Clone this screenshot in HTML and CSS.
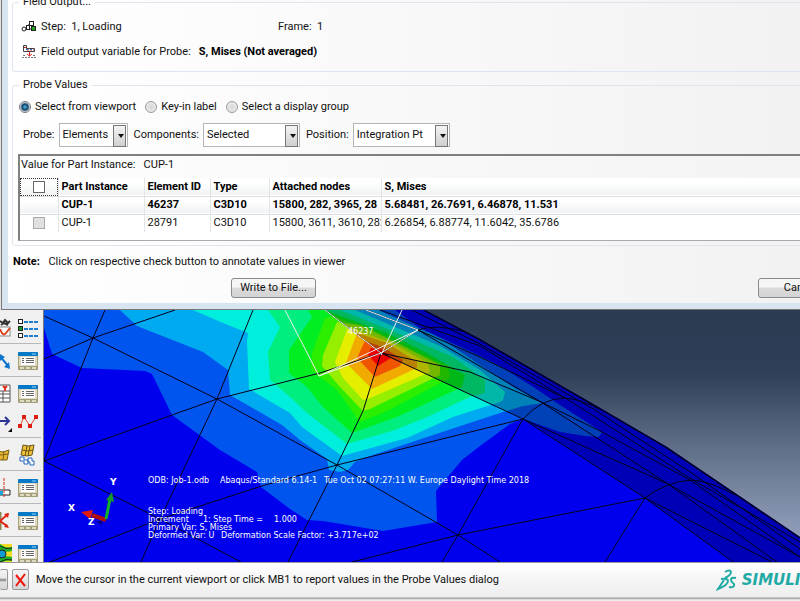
FILE: index.html
```html
<!DOCTYPE html>
<html lang="en">
<head>
  <meta charset="UTF-8">
  <meta name="viewport" content="width=device-width, initial-scale=1.0">
  <title>Probe Values</title>
  <link rel="stylesheet" href="styles.css">
</head>
<body>
  <!-- shared icons -->
  <svg class="sprite" aria-hidden="true">
    <symbol id="manager" viewBox="0 0 20 20">
      <rect x="0" y="1" width="20" height="18" rx="1" fill="#a39f7c"/>
      <rect x="0" y="1" width="20" height="4" rx="1" fill="#0878c8"/>
      <rect x="14" y="2" width="4" height="2" fill="#4aa5e4"/>
      <rect x="1" y="5" width="18" height="10" fill="#dedbc0"/>
      <rect x="3" y="6" width="14" height="8" fill="#fff"/>
      <path d="M4 7.500h2M8 7.500h8M4 9.500h2M8 9.500h8M4 11.500h2M8 11.500h8" stroke="#666" stroke-width="1"/>
      <path d="M2 17h4M8 17h4M14 17h4" stroke="#dedbc0" stroke-width="2"/>
    </symbol>
  </svg>

  <form class="dialog" onsubmit="return false">
    <fieldset class="group">
      <legend>Field Output...</legend>
      <div class="info step">
        <svg width="16" height="12" viewBox="0 0 16 12">
          <path d="M4 8h4V3h3M8 8h3" fill="none" stroke="#222"/>
          <circle cx="3" cy="8" r="2" fill="#fff" stroke="#222"/>
          <rect x="5.500" y="4.500" width="3" height="4" fill="#fff" stroke="#222"/>
          <rect x="8.500" y=".5" width="4" height="4" fill="#fff" stroke="#222"/>
          <rect x="10.500" y="5.500" width="4" height="4" fill="#1fa51f" stroke="#222"/>
        </svg>
        <span class="step-name">Step:&nbsp; 1, Loading</span>
        <span>Frame:&nbsp; 1</span>
      </div>
      <div class="info">
        <svg width="16" height="16" viewBox="0 0 16 16">
          <path d="M2.500 1.500h3v3h8v3h-11z" fill="#fff" stroke="#444"/>
          <path d="M3 3.500h2M6 6h7" stroke="#d22" stroke-dasharray="2 1"/>
          <path d="M5 5.500h8" stroke="#2a6fc0" stroke-dasharray="2 2"/>
          <path d="M8.500 8v4M6 10l2.500 2 2.500-2" fill="none" stroke="#d22"/>
          <path d="M1 13.500h14M2 11.500h3M12 11.500h2" stroke="#777" stroke-dasharray="2 1"/>
        </svg>
        <span>Field output variable for Probe:</span>
        <b>S, Mises (Not averaged)</b>
      </div>
    </fieldset>

    <fieldset class="group probe">
      <legend>Probe Values</legend>
      <div class="radios">
        <label><input type="radio" name="src" checked>Select from viewport</label>
        <label><input type="radio" name="src">Key-in label</label>
        <label><input type="radio" name="src">Select a display group</label>
      </div>
      <div class="combos">
        <label for="probe">Probe:</label>
        <span class="combo"><select id="probe" class="short"><option>Elements</option><option>Nodes</option></select></span>
        <label for="comp">Components:</label>
        <span class="combo"><select id="comp"><option>Selected</option><option>All</option></select></span>
        <label for="pos">Position:</label>
        <span class="combo"><select id="pos"><option>Integration Pt</option><option>Centroid</option></select></span>
      </div>
      <div class="values">
        <p>Value for Part Instance:&nbsp;&nbsp; CUP-1</p>
        <table>
          <colgroup>
            <col class="c-check"><col class="c-part"><col class="c-id"><col class="c-type"><col class="c-nodes"><col>
          </colgroup>
          <tr class="head">
            <th class="focus"><input type="checkbox" aria-label="Check all"></th>
            <th>Part Instance</th><th>Element ID</th><th>Type</th><th>Attached nodes</th><th>S, Mises</th>
          </tr>
          <tr class="current">
            <td></td><td>CUP-1</td><td>46237</td><td>C3D10</td><td>15800, 282, 3965, 28</td><td>5.68481, 26.7691, 6.46878, 11.531</td>
          </tr>
          <tr>
            <td><input type="checkbox" class="grey" aria-label="Annotate 28791"></td><td>CUP-1</td><td>28791</td><td>C3D10</td><td>15800, 3611, 3610, 282</td><td>6.26854, 6.88774, 11.6042, 35.6786</td>
          </tr>
        </table>
      </div>
    </fieldset>

    <p class="note"><b>Note:</b> Click on respective check button to annotate values in viewer</p>
    <div class="actions">
      <button type="button">Write to File...</button>
      <button type="button">Cancel</button>
    </div>
  </form>

  <main class="workspace">
    <div class="toolbox">
      <div class="tools">
        <button aria-label="Plot options"><svg width="12" height="20" viewBox="0 0 12 20"><path d="M0 3l3 2 2-3 3 3 2-2M1 7l3-2 4 2" fill="none" stroke="#333" stroke-width="2"/><rect x="-4" y="9" width="14" height="9" fill="#fff" stroke="#888"/><path d="M0 11q3 8 6 4l4-5" fill="none" stroke="#e0421c" stroke-width="2"/></svg></button>
        <button aria-label="Result options"><svg width="20" height="20" viewBox="0 0 20 20"><g fill="#fff" stroke="#222"><rect x=".5" y="1.500" width="4" height="4"/><rect x=".5" y="8.500" width="4" height="4" fill="#12a022"/><rect x=".5" y="15.500" width="4" height="4"/></g><path d="M6 4h14M6 11h14M6 18h14" stroke="#1c7ed0" stroke-width="2" stroke-dasharray="4 1"/></svg></button>
      </div>
      <div class="tools">
        <button aria-label="Symbols"><svg width="12" height="20" viewBox="0 0 12 20"><path d="M-2 3l11 13" stroke="#0d75cc" stroke-width="2"/><path d="M10 18l-6-2 5-5zM0 3l5 3-5 4z" fill="#0d75cc"/></svg></button>
        <button aria-label="Symbol manager"><svg width="20" height="20"><use href="#manager"/></svg></button>
      </div>
      <div class="tools">
        <button aria-label="XY data"><svg width="12" height="20" viewBox="0 0 12 20"><path d="M-3 1h13v17H-3zM-3 7h13M-3 10h13M-3 14h13M3 7v11" fill="#fff" stroke="#555"/><path d="M3 2l2 2 2-2M5 4v3" fill="none" stroke="#e0321c" stroke-width="2"/></svg></button>
        <button aria-label="XY data manager"><svg width="20" height="20"><use href="#manager"/></svg></button>
        <button aria-label="Path"><svg width="12" height="20" viewBox="0 0 12 20"><path d="M0 9h9M5 5l4 4-4 4" fill="none" stroke="#2c3598" stroke-width="2"/><path d="M12 16v4H8z"/></svg></button>
        <button aria-label="XY plot"><svg width="20" height="20" viewBox="0 0 20 20"><path d="M2 14L6 5l6 9 6-9" fill="none" stroke="#e8442a" stroke-width="1"/><g fill="#dd1f12"><rect x="0" y="12" width="4" height="4"/><rect x="4" y="3" width="4" height="4"/><rect x="10" y="12" width="4" height="4"/><rect x="16" y="3" width="4" height="4"/></g></svg></button>
      </div>
      <div class="tools">
        <button aria-label="Superimpose"><svg width="12" height="20" viewBox="0 0 12 20"><path d="M-3 6l6 1 6-2-2 10-6 0-4-1z" fill="#e8b630" stroke="#766015"/><path d="M0 10l8-1M4 6l-1 9" stroke="#766015"/></svg></button>
        <button aria-label="Mesh options"><svg width="20" height="22" viewBox="0 0 20 22"><path d="M5 1q5 2 11 0l-2 10q-5 2-11 0z" fill="#f1c13c" stroke="#655413"/><path d="M4 6q6 2 11 0M9 2L7 12M12 2l-2 10" fill="none" stroke="#655413"/><path d="M2 13h4v3h4v4H6v-3H2zM10 14h4v3h2v4h-4v-3h-2z" fill="#fff" stroke="#2762ba"/></svg></button>
      </div>
      <div class="tools">
        <button aria-label="View cut"><svg width="12" height="20" viewBox="0 0 12 20"><path d="M-2 12h12v5H-2z" fill="#fff" stroke="#222"/><path d="M0 13h3v4H0z" fill="#16a5dd"/><path d="M4 0v20" stroke="#e02818" stroke-dasharray="3 1"/></svg></button>
        <button aria-label="View cut manager"><svg width="20" height="20"><use href="#manager"/></svg></button>
      </div>
      <div class="tools">
        <button aria-label="Free body"><svg width="12" height="20" viewBox="0 0 12 20"><path d="M0 1v18" stroke="#8d8554" stroke-width="3"/><path d="M0 10l8-7M0 10l7 5" stroke="#df2414" stroke-width="2"/><path d="M9 2L4 3l4 4zM9 17l-5-1 3-3z" fill="#df2414"/></svg></button>
        <button aria-label="Free body manager"><svg width="20" height="20"><use href="#manager"/></svg></button>
      </div>
      <div class="tools">
        <button aria-label="Contours"><svg width="12" height="20" viewBox="0 0 12 20"><rect width="12" height="20" fill="#f3dc26"/><path d="M0 0q6 5 12 3v4Q6 9 0 6zM0 20q6-5 12-3v-4Q6 11 0 14z" fill="#1cb32b"/><circle cx="2" cy="10" r="4" fill="#129ad3" stroke="#222"/><path d="M0 2q6 4 12 2M0 18q6-4 12-2" fill="none" stroke="#222"/></svg></button>
        <button aria-label="Contour manager"><svg width="20" height="20"><use href="#manager"/></svg></button>
      </div>
    </div>

    <svg class="viewport" viewBox="44 310 756 252" preserveAspectRatio="xMinYMin slice">
      <defs>
        <linearGradient id="sky" x1="0" y1="0" x2="0" y2="1">
          <stop offset="0" stop-color="#2b3b52"/>
          <stop offset=".25" stop-color="#2f3f57"/>
          <stop offset=".5" stop-color="#596880"/>
          <stop offset=".85" stop-color="#8b98b4"/>
          <stop offset="1" stop-color="#98a5c2"/>
        </linearGradient>
        <clipPath id="part"><path d="M44 310H425L480 339L595 405L667 447L735 493L800 537V562H44z"/></clipPath>
      </defs>
      <rect x="44" y="310" width="756" height="252" fill="url(#sky)"/>
      <g clip-path="url(#part)">
        <rect x="44" y="310" width="756" height="252" fill="#0000ee"/>
        <!-- contour bands, low to high stress -->
        <path fill="#0055ee" d="M44 310V328L52 354L82 368L145 371L152 374L172 415L220 450L257 472L261 487L290 509L307 520L323 521L383 531L437 522L436 491L462 460L480 446L510 424L523 419L560 432L585 436L599 437L602 432L560 405L535 388L500 366L480 356L420 328L395 310z"/>
        <path fill="#00aaf0" d="M120 310L137 326L203 352L228 370L230 395L282 425L300 440L327 459L329 470L340 472L348 470L355 462L367 457L433 435L500 413L523 406L542 403L513 387L480 365L440 338L378 310z"/>
        <path fill="#00eedc" d="M193 310L223 323L248 333L247 342L249 389L290 413L302 427L342 456L407 438L453 417L500 402L503 400L505 392L480 370L440 346L355 310z"/>
        <path fill="#00ee80" d="M268 310L280 327L268 352L270 380L290 397L307 413L347 444L395 430L427 417L470 397L485 393L485 380L453 357L390 330L340 310z"/>
        <path fill="#00ee22" d="M308 310L312 317L289 350V373L307 387L323 407L352 433L397 417L462 387L465 375L427 353L387 333L325 310z"/>
        <path fill="#2cee00" d="M325 318L312 353L311 370L337 390L360 422L387 411L450 378L448 367L407 347L373 330L333 316z"/>
        <path fill="#96ee00" d="M337 322L323 355L322 366L340 387L363 411L370 409L440 375L440 365L395 342L360 325z"/>
        <path fill="#e6ee00" d="M348 327L335 362L343 378L363 400L368 399L430 372L428 363L390 342z"/>
        <path fill="#f0aa00" d="M357 333L346 363L372 389L417 368V362L387 343z"/>
        <path fill="#f05500" d="M365 341L357 358L375 377L400 366L403 360L383 347z"/>
        <path fill="#ee0000" d="M371 348L368 355L378 366L391 358L382 350z"/>
        <path fill="#000" opacity=".23" d="M325 310L381 353L523 419L645 498L733 562H800V310z"/>
        <!-- element edges -->
        <g class="mesh">
          <path d="M44 316L93 338L217 399L337 465L458 535L500 562"/>
          <path d="M44 359L93 338L175 310M105 310L93 338L44 461L172 415L217 399L320 373L381 353"/>
          <path d="M253 310L217 399L160 519L141 562M44 461L160 519L241 562"/>
          <path d="M50 562L160 519L265 485L337 465L523 419M381 353L363 411L337 465L288 562"/>
          <path d="M352 562L458 535L645 498L605 562M442 562L458 535L523 419"/>
          <path d="M325 310L381 353L523 419L645 498L733 562"/>
          <path d="M381 353L470 372L541 402L602 432L690 480L800 557"/>
          <path d="M418 330L500 378L541 402L600 440L668 484L777 562"/>
          <path d="M366 310L418 330L480 357L567 399L693 480L800 542"/>
          <path d="M523 419L668 484L800 557M645 498L772 562"/>
          <path d="M381 353L418 330Q435 323 470 333M380 310L480 346L565 398"/>
          <path d="M523 419Q542 398 565 398Q580 399 599 409M645 498Q667 481 693 480Q712 482 735 495"/>
          <path d="M412 310L480 344L595 410L693 474L800 549"/>
          <path class="outline" d="M425 310L480 339L595 405L667 447L735 493L800 537"/>
        </g>
        <path class="probe-edge" d="M285 310L319 376L381 353L325 310M319 376L418 330L366 310M402 310L381 355M418 330L381 353"/>
      </g>
      <!-- view triad -->
      <g>
        <path d="M106 520L92 515" stroke="#b40d0d" stroke-width="4"/>
        <path d="M81 512L93 510L90 519z" fill="#e41a0c"/>
        <path d="M106 519L110 499" stroke="#10b426" stroke-width="3"/>
        <path d="M112 492L106 500L114 502z" fill="#15992a"/>
        <path d="M96 521l6 0v4z" fill="#00007c"/>
      </g>
      <g class="axis">
        <text x="110" y="485">Y</text>
        <text x="68" y="511">X</text>
        <text x="88" y="525">Z</text>
      </g>
      <g class="state">
        <text x="348" y="334">46237</text>
        <text x="148" y="483">ODB: Job-1.odb</text>
        <text x="220" y="483">Abaqus/Standard 6.14-1</text>
        <text x="324" y="483">Tue Oct 02 07:27:11 W. Europe Daylight Time 2018</text>
        <text x="148" y="514">Step: Loading</text>
        <text x="148" y="522">Increment</text>
        <text x="203" y="522">1: Step Time =</text>
        <text x="274" y="522">1.000</text>
        <text x="148" y="530">Primary Var: S, Mises</text>
        <text x="148" y="538">Deformed Var: U</text>
        <text x="221" y="538">Deformation Scale Factor: +3.717e+02</text>
      </g>
    </svg>
  </main>

  <footer class="prompt">
    <button class="back" aria-label="Previous step"><svg width="8" height="20" viewBox="0 0 8 20"><path d="M0 10h7" stroke="#999" stroke-width="3"/></svg></button>
    <button aria-label="Cancel procedure"><svg width="15" height="18" viewBox="0 0 15 18"><path d="M3 4l9 11M12 3L3 15" stroke="#f0140c" stroke-width="2"/></svg></button>
    <span class="message">Move the cursor in the current viewport or click MB1 to report values in the Probe Values dialog</span>
    <span class="brand">
      <svg width="22" height="22" viewBox="0 0 22 22"><path d="M9 3q5-3 6 0 0 3-6 6M5 10q7-1 7 2 0 4-10 8l6-9M20 9q-5-1-5 2 0 2 3 4 1 4-5 3" fill="none" stroke="#1faaa6" stroke-width="2"/></svg>
      <span>SIMULIA</span>
    </span>
  </footer>
</body>
</html>
```
FILE: styles.css
```css
* {
  box-sizing: border-box;
}

body {
  margin: 0;
  height: 100vh;
  display: flex;
  flex-direction: column;
  overflow: hidden;
  background: #e4e4e4;
  color: #111;
  font: 11px/14px Roboto, "Noto Sans", sans-serif;
}

p {
  margin: 0;
}

button,
select {
  font: inherit;
  color: inherit;
}

.sprite {
  position: absolute;
  width: 0;
  height: 0;
}

/* dialog window, runs off the top and right of the screen */
.dialog {
  flex: none;
  margin: -5px -50px 1px 2px;
  padding: 0 1px 0 4px;
  border: solid #d9e4f1;
  border-width: 0 6px 6px;
  outline: 1px solid #777;
  background: linear-gradient(90deg, #fff, #fbfbfb 30%, #f1f1f1);
  white-space: nowrap;
}

.group {
  margin: 0;
  padding: 0 0 0 8px;
  border: 1px solid #dde6ee;
  border-radius: 3px;
  min-width: 0;
}

.group legend {
  margin-left: -2px;
  padding: 0 4px;
}

.info {
  display: flex;
  align-items: center;
  gap: 4px;
  height: 25px;
}

.group .step {
  margin-top: 5px;
}

.info:last-child {
  margin-bottom: 7px;
}

.info b {
  margin-left: 4px;
  color: #000;
}

.step-name {
  width: 233px;
}

.probe {
  margin-top: 6px;
  padding: 0 0 4px 5px;
}

.probe legend {
  margin-left: 1px;
}

.radios {
  display: flex;
  gap: 9px;
  height: 30px;
  padding-left: 1px;
  align-items: center;
}

.radios label {
  display: flex;
  align-items: center;
  gap: 4px;
}

.radios input {
  appearance: none;
  width: 12px;
  height: 12px;
  margin: 0;
  border: 1px solid #999;
  border-radius: 50%;
  background: radial-gradient(#d5d5d5, #f4f4f4);
}

.radios input:checked {
  border-color: #777;
  background: radial-gradient(#4cc0ea, #123f66 3px, #e8eef2 5px);
}

.combos {
  display: flex;
  align-items: center;
  gap: 4px;
  padding-left: 5px;
  margin-top: 1px;
  margin-bottom: 7px;
}

.combo {
  position: relative;
  margin-right: 2px;
}

.combo select {
  appearance: none;
  display: block;
  width: 97px;
  height: 24px;
  padding: 0 3px;
  border: 1px solid #b5b5b9;
  border-radius: 0;
  background: #fff;
}

.combo .short {
  width: 69px;
}

.combo::after {
  content: "";
  position: absolute;
  top: 2px;
  right: 2px;
  width: 11px;
  height: 20px;
  border: 1px solid #777;
  background: linear-gradient(#f4f4f4, #cfcfcf);
  pointer-events: none;
}

.combo::before {
  content: "";
  position: absolute;
  z-index: 1;
  top: 11px;
  right: 4px;
  border: solid transparent;
  border-width: 4px 3px 0;
  border-top-color: #111;
  pointer-events: none;
}

.values {
  border: 2px solid #808080;
  border-bottom: 1px solid #aaa;
  padding-bottom: 8px;
  background: #fff;
}

.values p {
  padding: 2px 1px 6px;
  background: linear-gradient(90deg, #fdfdfd, #f3f3f3);
}

table {
  width: 100%;
  table-layout: fixed;
  border-collapse: collapse;
}

.c-check { width: 38px; }
.c-part { width: 86px; }
.c-id { width: 66px; }
.c-type { width: 59px; }
.c-nodes { width: 112px; }

th,
td {
  height: 18px;
  padding: 0 0 0 3px;
  text-align: left;
  overflow: hidden;
  border-right: 1px solid #e2e4e6;
}

.head,
.current {
  background: linear-gradient(#fff 30%, #f0f2f4);
  border-bottom: 1px solid #dcdee0;
  font-weight: bold;
  color: #000;
}

th:first-child,
td:first-child {
  padding: 0;
  text-align: center;
}

.focus {
  outline: 1px dotted #333;
  outline-offset: -1px;
}

table input {
  appearance: none;
  display: block;
  width: 12px;
  height: 12px;
  margin: 0 auto;
  border: 1px solid #666;
  background: #fff;
}

table .grey {
  border-color: #aaa;
  background: #e0e0e0;
}

.note {
  padding: 9px 0 9px 1px;
}

.note b {
  margin-right: 6px;
  color: #000;
}

.actions {
  display: flex;
  justify-content: space-between;
  padding-left: 219px;
  padding-bottom: 5px;
}

.actions button {
  width: 85px;
  height: 20px;
  padding: 0;
  border: 1px solid #8a8a8a;
  border-radius: 3px;
  background: linear-gradient(#f6f6f6 45%, #dadada 50%, #d4d4d4);
}

.workspace {
  flex: 1;
  display: flex;
  min-height: 0;
}

.toolbox {
  flex: none;
  width: 43px;
  padding-top: 1px;
  overflow: hidden;
  background: #f0f0f0;
}

.tools {
  display: grid;
  grid-template-columns: 12px 20px;
  column-gap: 6px;
  grid-auto-rows: 28px;
  padding: 3px 0 1px;
  margin-right: 2px;
  border-bottom: 1px solid #b8b8b8;
}

.tools button {
  display: flex;
  align-items: center;
  justify-content: center;
  padding: 0;
  border: 0;
  background: none;
}

.viewport {
  flex: 1;
  min-width: 0;
  height: 100%;
  border-left: 1px solid #777;
}

.mesh {
  fill: none;
  stroke: #00001c;
  stroke-width: 1;
}

.mesh .outline {
  stroke-width: 3;
}

.probe-edge {
  fill: none;
  stroke: #eee;
  stroke-width: 1;
}

.state,
.axis {
  fill: #fff;
  font: 8px "DejaVu Sans", sans-serif;
}

.axis {
  font-size: 9px;
  font-weight: bold;
}

.prompt {
  flex: none;
  display: flex;
  align-items: center;
  height: 39px;
  padding-bottom: 5px;
  gap: 4px;
  border-top: 1px solid #999;
  background: linear-gradient(#fff, #ededed 34px, #999 35px, #eee 37px);
  white-space: nowrap;
}

.prompt button {
  display: flex;
  align-items: center;
  justify-content: center;
  width: 17px;
  height: 21px;
  padding: 0;
  border: 1px solid #999;
  border-radius: 2px;
  background: linear-gradient(#f4f4f4, #d4d4d4);
}

.prompt .back {
  width: 8px;
  border-left: 0;
}

.message {
  margin-left: 3px;
}

.brand {
  display: flex;
  align-items: center;
  gap: 4px;
  margin-left: auto;
  margin-right: -12px;
  color: #1faaa6;
  font: italic bold 15px "DejaVu Sans", sans-serif;
}
```
